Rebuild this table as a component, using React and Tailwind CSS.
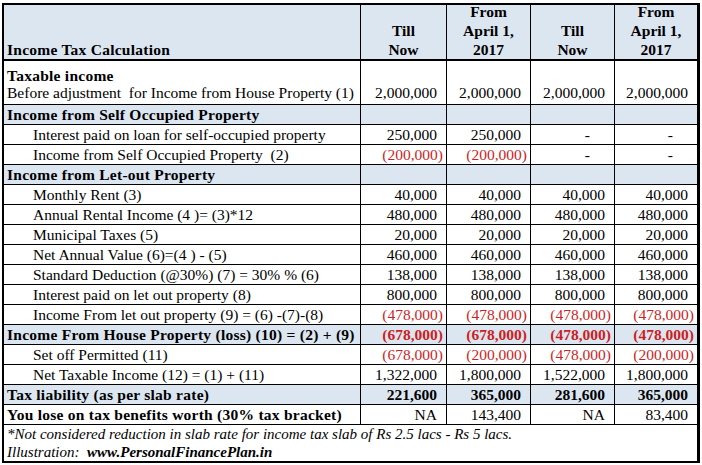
const FONT = { fontFamily: "'Liberation Serif', 'DejaVu Serif', serif" };

const COLS = ["w-[86px]", "w-[84px]", "w-[84px]", "w-[83px]"];

const rows = [
  { label: "Income from Self Occupied Property", head: true, vals: ["", "", "", ""] },
  { label: "Interest paid on loan for self-occupied property", vals: ["250,000", "250,000", "-", "-"] },
  { label: "Income from Self Occupied Property  (2)", vals: ["(200,000)", "(200,000)", "-", "-"] },
  { label: "Income from Let-out Property", head: true, vals: ["", "", "", ""] },
  { label: "Monthly Rent (3)", vals: ["40,000", "40,000", "40,000", "40,000"] },
  { label: "Annual Rental Income (4 )= (3)*12", vals: ["480,000", "480,000", "480,000", "480,000"] },
  { label: "Municipal Taxes (5)", vals: ["20,000", "20,000", "20,000", "20,000"] },
  { label: "Net Annual Value (6)=(4 ) - (5)", vals: ["460,000", "460,000", "460,000", "460,000"] },
  { label: "Standard Deduction (@30%) (7) = 30% % (6)", vals: ["138,000", "138,000", "138,000", "138,000"] },
  { label: "Interest paid on let out property (8)", vals: ["800,000", "800,000", "800,000", "800,000"] },
  { label: "Income From let out property (9) = (6) -(7)-(8)", vals: ["(478,000)", "(478,000)", "(478,000)", "(478,000)"] },
  { label: "Income From House Property (loss) (10) = (2) + (9)", head: true, boldVals: true, vals: ["(678,000)", "(678,000)", "(478,000)", "(478,000)"] },
  { label: "Set off Permitted (11)", vals: ["(678,000)", "(200,000)", "(478,000)", "(200,000)"] },
  { label: "Net Taxable Income (12) = (1) + (11)", vals: ["1,322,000", "1,800,000", "1,522,000", "1,800,000"] },
  { label: "Tax liability (as per slab rate)", head: true, boldVals: true, vals: ["221,600", "365,000", "281,600", "365,000"] },
  { label: "You lose on tax benefits worth (30% tax bracket)", boldLabel: true, vals: ["NA", "143,400", "NA", "83,400"] },
];

function Val({ v, bold, w }) {
  const neg = v.startsWith("(");
  const dash = v === "-";
  const pr = neg ? "pr-[3px]" : dash ? "pr-[24px]" : "pr-[9px]";
  return (
    <div
      className={`${w} shrink-0 border-l border-black flex items-end justify-end ${pr} ${
        neg ? "text-[#cc1f1f]" : ""
      } ${bold ? "font-bold" : ""}`}
    >
      {v}
    </div>
  );
}

function Row({ row }) {
  const bold = row.head || row.boldLabel;
  return (
    <div
      className={`flex h-[20px] border-b border-black leading-[19px] ${
        row.head ? "bg-[#dce6f1]" : "bg-white"
      }`}
    >
      <div
        className={`w-[356px] shrink-0 whitespace-pre flex items-end ${
          bold ? "pl-[3px] font-bold tracking-[0.25px]" : "pl-[29px]"
        }`}
      >
        {row.label}
      </div>
      {row.vals.map((v, i) => (
        <Val key={i} v={v} bold={row.boldVals} w={COLS[i]} />
      ))}
    </div>
  );
}

export default function App() {
  return (
    <div className="w-[702px] h-[465px] bg-white text-black text-[15.5px] pt-[3px] pl-[2px]" style={FONT}>
      <div className="w-[698px] h-[460px] border-t-2 border-l-2 border-b-2 border-r-[3px] border-black flex flex-col">
        {/* Header */}
        <div className="flex h-[56px] border-b-2 border-black bg-[#dce6f1] font-bold leading-[19px]">
          <div className="w-[356px] shrink-0 pl-[3px] flex items-end tracking-[0.25px]">Income Tax Calculation</div>
          {[
            ["Till", "Now"],
            ["From", "April 1,", "2017"],
            ["Till", "Now"],
            ["From", "April 1,", "2017"],
          ].map((lines, i) => (
            <div
              key={i}
              className={`${COLS[i]} shrink-0 border-l border-black flex flex-col justify-end items-center`}
            >
              {lines.map((l) => (
                <span key={l}>{l}</span>
              ))}
            </div>
          ))}
        </div>

        {/* Taxable income */}
        <div className="flex h-[44px] border-b border-black leading-[17px]">
          <div className="w-[356px] shrink-0 pl-[3px] pb-[3px] flex flex-col justify-end whitespace-pre">
            <span className="font-bold tracking-[0.25px]">Taxable income</span>
            <span>Before adjustment  for Income from House Property (1)</span>
          </div>
          {COLS.map((w, i) => (
            <div key={i} className={`${w} shrink-0 border-l border-black flex items-end justify-end pr-[9px] pb-[3px]`}>
              2,000,000
            </div>
          ))}
        </div>

        {rows.map((r) => (
          <Row key={r.label} row={r} />
        ))}

        {/* Footnote */}
        <div className="h-[36px] px-[3px] italic text-[15px] leading-[18px] flex flex-col justify-center">
          <span>*Not considered reduction in slab rate for income tax slab of Rs 2.5 lacs - Rs 5 lacs.</span>
          <span className="whitespace-pre">
            Illustration:  <span className="font-bold">www.PersonalFinancePlan.in</span>
          </span>
        </div>
      </div>
    </div>
  );
}
